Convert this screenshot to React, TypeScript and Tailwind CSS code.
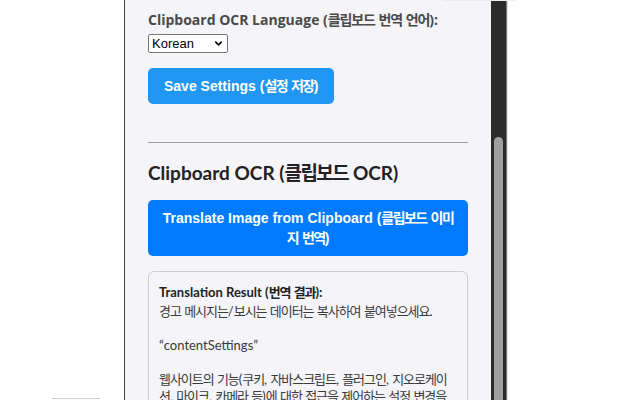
import { ChevronDown } from "lucide-react";

const lato = "font-['Lato','Noto_Sans_CJK_KR',sans-serif]";
const open = "font-['Open_Sans','Noto_Sans_CJK_KR',sans-serif]";
const arial = "font-['Liberation_Sans','Noto_Sans_CJK_KR',sans-serif]";

const result = `경고 메시지는/보시는 데이터는 복사하여 붙여넣으세요.

“contentSettings”

웹사이트의 기능(쿠키, 자바스크립트, 플러그인, 지오로케이션, 마이크, 카메라 등)에 대한 접근을 제어하는 설정 변경을 허용합니다.`;

// Hangul in Noto CJK runs wider than the original font; tighten it a little
function Ko({ text, tight = false }: { text: string; tight?: boolean }) {
  return (
    <>
      {text.split(/([\uAC00-\uD7A3]+)/).map((part, i) =>
        i % 2 ? (
          <span key={i} className={tight ? "tracking-[-0.11em]" : "tracking-[-0.08em]"}>
            {part}
          </span>
        ) : (
          part
        )
      )}
    </>
  );
}

export default function App() {
  return (
    <div className="relative w-[640px] h-[400px] bg-white overflow-hidden">
      <div className="absolute top-0 left-[443px] w-[72px] h-[1px] bg-[#ececec]" />
      <div className="absolute bottom-[1px] left-[52px] w-[48px] h-[1px] bg-[#d0d0d0]" />

      <div className="ml-[124px] w-[384px] h-full flex">
        <div className="flex-1 h-full overflow-hidden bg-[#f4f4f9] border-l border-[#444] px-[23px] pt-[10px]">
          <label className={`${open} block h-[20px] text-[14px] leading-[20px] font-bold text-[#4a4a4a]`}>
            <Ko text="Clipboard OCR Language (클립보드 번역 언어):" />
          </label>
          <div className="relative mt-[4px] w-[80px] h-[19px]">
            <select
              defaultValue="ko"
              className={`${arial} block appearance-none w-full h-full border border-[#767676] rounded-[2px] bg-white text-[13px] leading-[17px] text-black pl-[3px]`}
            >
              <option value="ko">Korean</option>
            </select>
            <ChevronDown
              className="absolute right-[4px] top-[4px] w-[11px] h-[11px] text-black pointer-events-none"
              strokeWidth={3.5}
            />
          </div>

          <button
            className={`${arial} block mt-[15px] px-4 h-[36px] rounded-[5px] bg-[#2196f3] text-white text-[14px] font-bold`}
          >
            <Ko text="Save Settings (설정 저장)" tight />
          </button>

          <hr className="mt-[38px] border-0 border-t border-[#a0a0a0]" />

          <h2 className={`${lato} mt-[16px] h-[28px] text-[19px] leading-[28px] font-bold text-[#222]`}>
            <Ko text="Clipboard OCR (클립보드 OCR)" />
          </h2>

          <button
            className={`${arial} block mt-[13px] w-full py-[8px] rounded-[5px] bg-[#007bff] text-white text-[14px] leading-[20px] font-bold px-3 text-center`}
          >
            <Ko text="Translate Image from Clipboard (클립보드 이미지 번역)" tight />
          </button>

          <div className="mt-[15px] border border-[#cccccc] rounded-[6px] px-[10px] pt-[11px] pb-[10px]">
            <div className={`${lato} text-[13px] leading-[18px] font-bold text-[#222]`}>
              <Ko text="Translation Result (번역 결과):" />
            </div>
            <div className={`${lato} mt-[2px] text-[13px] leading-[17px] text-[#3a3a3a] whitespace-pre-wrap`}>
              <Ko text={result} />
            </div>
          </div>
        </div>

        <div className="w-[15px] h-full bg-[#2b2b2b] flex flex-col items-center pt-[137px]">
          <div className="w-[9px] flex-1 bg-[#9f9f9f] rounded-t-[5px]" />
        </div>
        <div className="w-[1px] h-full bg-[#7a7a7a]" />
        <div className="w-[1px] h-full bg-[#e0e0e0]" />
      </div>
    </div>
  );
}
